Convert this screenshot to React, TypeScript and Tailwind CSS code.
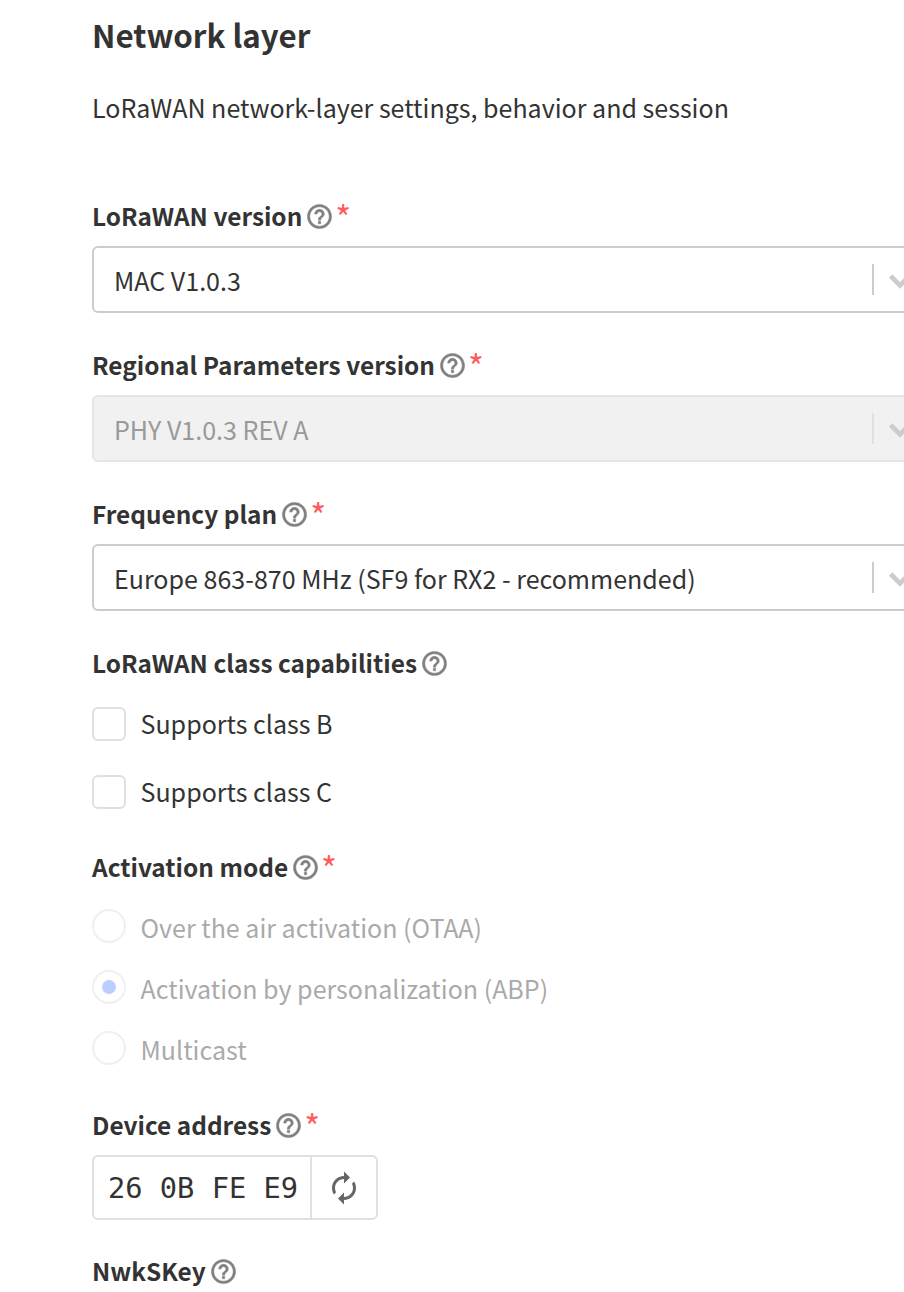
import type { ReactNode } from 'react';

const HELP_PATH =
  'M11 18h2v-2h-2v2zm1-16C6.48 2 2 6.48 2 12s4.48 10 10 10 10-4.48 10-10S17.52 2 12 2zm0 18c-4.41 0-8-3.59-8-8s3.59-8 8-8 8 3.59 8 8-3.59 8-8 8zm0-14c-2.21 0-4 1.79-4 4h2c0-1.1.9-2 2-2s2 .9 2 2c0 2-3 1.75-3 5h2c0-2.25 3-2.5 3-5 0-2.21-1.79-4-4-4z';
const RENEW_PATH =
  'M12 6v3l4-4-4-4v3c-4.42 0-8 3.58-8 8 0 1.57.46 3.03 1.24 4.26L6.7 14.8c-.45-.83-.7-1.79-.7-2.8 0-3.31 2.69-6 6-6zm6.76 1.74L17.3 9.2c.44.84.7 1.79.7 2.8 0 3.31-2.69 6-6 6v-3l-4 4 4 4v-3c4.42 0 8-3.58 8-8 0-1.57-.46-3.03-1.24-4.26z';

function Label({ children, required }: { children: ReactNode; required?: boolean }) {
  return (
    <div className="flex items-center h-[40px] text-[24.4px] font-semibold text-[#333333]">
      <span>{children}</span>
      <svg viewBox="0 0 24 24" className="w-[29px] h-[29px] ml-[3px] fill-[#808080] stroke-[#808080] stroke-[0.4]">
        <path d={HELP_PATH} />
      </svg>
      {required && (
        <span className="ml-[1px] -mt-[6px] h-[24px] leading-[32px] text-[34px] text-[#ff5c5c] font-normal">*</span>
      )}
    </div>
  );
}

function Select({ value, disabled }: { value: string; disabled?: boolean }) {
  return (
    <div
      className={`mt-[10px] flex items-center w-[836px] h-[67px] rounded-[6px] border-2 pl-[20px] ${
        disabled ? 'bg-[#f1f1f1] border-[#e5e5e5] text-[#999999]' : 'bg-white border-[#cccccc] text-[#333333]'
      }`}
    >
      <span className="flex-1">{value}</span>
      <span className={`w-[2px] h-[31px] ${disabled ? 'bg-[#e0e0e0]' : 'bg-[#cccccc]'}`} />
      <svg viewBox="0 0 24 24" className="w-[32px] h-[32px] mx-[10px] fill-none stroke-[#cccccc] stroke-[3.5]">
        <path d="M5 9l7 7 7-7" />
      </svg>
    </div>
  );
}

function Checkbox({ label }: { label: string }) {
  return (
    <div className="flex items-center h-[34px]">
      <span className="w-[34px] h-[34px] rounded-[6px] border-2 border-[#e0e0e0] bg-white" />
      <span className="ml-[14.5px] mb-[2px] text-[#333333]">{label}</span>
    </div>
  );
}

function Radio({ label, checked }: { label: string; checked?: boolean }) {
  return (
    <div className="flex items-center h-[34px]">
      <span className="flex items-center justify-center w-[34px] h-[34px] rounded-full border-2 border-[#f0f0f0] bg-white">
        {checked && <span className="w-[14px] h-[14px] rounded-full bg-[#bccdff]" />}
      </span>
      <span className="ml-[14.5px] mt-[2px] text-[#aaaaaa]">{label}</span>
    </div>
  );
}

export default function App() {
  return (
    <div className="w-[904px] h-[1292px] overflow-hidden bg-white pl-[92px] text-[25.04px] font-['Noto_Sans_CJK_JP',sans-serif] leading-[40px]">
      <h1 className="mt-[15px] h-[40px] text-[31.3px] font-semibold text-[#333333]">Network layer</h1>
      <p className="mt-[32px] text-[#333333]">LoRaWAN network-layer settings, behavior and session</p>

      <div className="mt-[69px]">
        <Label required>LoRaWAN version</Label>
        <Select value="MAC V1.0.3" />
      </div>
      <div className="mt-[32px]">
        <Label required>Regional Parameters version</Label>
        <Select value="PHY V1.0.3 REV A" disabled />
      </div>
      <div className="mt-[32px]">
        <Label required>Frequency plan</Label>
        <Select value="Europe 863-870 MHz (SF9 for RX2 - recommended)" />
      </div>

      <div className="mt-[32px]">
        <Label>LoRaWAN class capabilities</Label>
        <div className="mt-[24px] flex flex-col gap-[34px]">
          <Checkbox label="Supports class B" />
          <Checkbox label="Supports class C" />
        </div>
      </div>

      <div className="mt-[38px]">
        <Label required>Activation mode</Label>
        <div className="mt-[22px] flex flex-col gap-[27px]">
          <Radio label="Over the air activation (OTAA)" />
          <Radio label="Activation by personalization (ABP)" checked />
          <Radio label="Multicast" />
        </div>
      </div>

      <div className="mt-[40px]">
        <Label required>Device address</Label>
        <div className="mt-[10px] flex w-[286px] h-[65px] rounded-[6px] border-2 border-[#e0e0e0] bg-white">
          <span className="w-[216px] pl-[14px] flex items-center font-['DejaVu_Sans_Mono',monospace] text-[28.7px] text-[#333333] whitespace-pre">
            26 0B FE E9
          </span>
          <span className="flex-1 flex items-center justify-center border-l-2 border-[#e0e0e0]">
            <svg viewBox="0 0 24 24" className="w-[36px] h-[36px] fill-[#666666]">
              <path d={RENEW_PATH} />
            </svg>
          </span>
        </div>
      </div>

      <div className="mt-[31px]">
        <Label>NwkSKey</Label>
      </div>
    </div>
  );
}
